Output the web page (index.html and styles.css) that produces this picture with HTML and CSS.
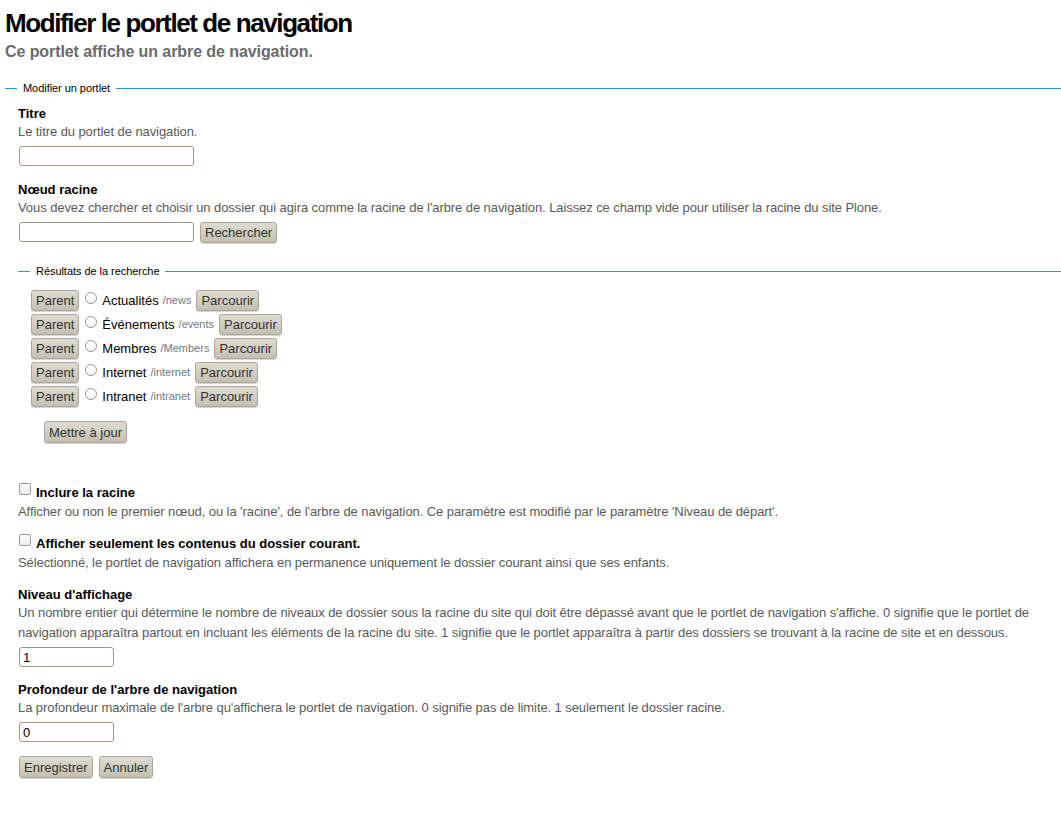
FILE: index.html
```html
<!DOCTYPE html>
<html lang="fr">
<head>
<meta charset="utf-8">
<title>Modifier le portlet de navigation</title>
<link rel="stylesheet" href="styles.css">
</head>
<body>
<h1 class="title">Modifier le portlet de navigation</h1>
<p class="lead">Ce portlet affiche un arbre de navigation.</p>

<form class="form">
  <fieldset class="group">
    <legend class="legend">Modifier un portlet</legend>

    <div class="field">
      <label class="label">Titre</label>
      <div class="help">Le titre du portlet de navigation.</div>
      <div class="input-row"><input class="text-input" type="text"></div>
    </div>

    <div class="field">
      <label class="label">Nœud racine</label>
      <div class="help">Vous devez chercher et choisir un dossier qui agira comme la racine de l'arbre de navigation. Laissez ce champ vide pour utiliser la racine du site Plone.</div>
      <div class="input-row"><input class="text-input" type="text"><button type="button" class="btn">Rechercher</button></div>
    </div>

    <fieldset class="group sub">
      <legend class="legend">Résultats de la recherche</legend>
      <div class="results">
        <div class="result"><button type="button" class="btn">Parent</button><input class="radio" type="radio" name="r"><span class="r-title">Actualités</span><span class="r-path">/news</span><button type="button" class="btn">Parcourir</button></div>
        <div class="result"><button type="button" class="btn">Parent</button><input class="radio" type="radio" name="r"><span class="r-title">Événements</span><span class="r-path">/events</span><button type="button" class="btn">Parcourir</button></div>
        <div class="result"><button type="button" class="btn">Parent</button><input class="radio" type="radio" name="r"><span class="r-title">Membres</span><span class="r-path">/Members</span><button type="button" class="btn">Parcourir</button></div>
        <div class="result"><button type="button" class="btn">Parent</button><input class="radio" type="radio" name="r"><span class="r-title">Internet</span><span class="r-path">/internet</span><button type="button" class="btn">Parcourir</button></div>
        <div class="result"><button type="button" class="btn">Parent</button><input class="radio" type="radio" name="r"><span class="r-title">Intranet</span><span class="r-path">/intranet</span><button type="button" class="btn">Parcourir</button></div>
      </div>
      <div class="update"><button type="button" class="btn">Mettre à jour</button></div>
    </fieldset>

    <div class="field check-field first-check">
      <label class="check-label"><input class="checkbox" type="checkbox">Inclure la racine</label>
      <div class="help">Afficher ou non le premier nœud, ou la 'racine', de l'arbre de navigation. Ce paramètre est modifié par le paramètre 'Niveau de départ'.</div>
    </div>

    <div class="field check-field">
      <label class="check-label"><input class="checkbox" type="checkbox">Afficher seulement les contenus du dossier courant.</label>
      <div class="help">Sélectionné, le portlet de navigation affichera en permanence uniquement le dossier courant ainsi que ses enfants.</div>
    </div>

    <div class="field">
      <label class="label">Niveau d'affichage</label>
      <div class="help">Un nombre entier qui détermine le nombre de niveaux de dossier sous la racine du site qui doit être dépassé avant que le portlet de navigation s'affiche. 0 signifie que le portlet de navigation apparaîtra partout en incluant les éléments de la racine du site. 1 signifie que le portlet apparaîtra à partir des dossiers se trouvant à la racine de site et en dessous.</div>
      <div class="input-row"><input class="text-input short" type="text" value="1"></div>
    </div>

    <div class="field last-field">
      <label class="label">Profondeur de l'arbre de navigation</label>
      <div class="help">La profondeur maximale de l'arbre qu'affichera le portlet de navigation. 0 signifie pas de limite. 1 seulement le dossier racine.</div>
      <div class="input-row"><input class="text-input short" type="text" value="0"></div>
    </div>

    <div class="actions">
      <button type="button" class="btn">Enregistrer</button>
      <button type="button" class="btn">Annuler</button>
    </div>
  </fieldset>
</form>
</body>
</html>
```

FILE: styles.css
```css
html, body {
  margin: 0;
  padding: 0;
  background: #fff;
}

body {
  font-family: "Liberation Sans", Arial, sans-serif;
  font-size: 13px;
  color: #000;
  padding: 8px 0 0 5px;
}

.title {
  margin: 0;
  font-size: 26px;
  line-height: 30px;
  font-weight: bold;
  letter-spacing: -1.4px;
  color: #000;
}

.lead {
  margin: 4px 0 0;
  font-size: 16px;
  line-height: 20px;
  font-weight: bold;
  letter-spacing: -0.08px;
  color: #6b6b6b;
}

.form {
  margin: 19px 0 0;
}

.group {
  margin: 0;
  padding: 10px 0 0 13px;
  border: none;
  border-top: 1px solid #2a9ad8;
  min-width: 0;
}

.legend {
  margin-left: -1px;
  padding: 0 6px;
  font-size: 11px;
  line-height: 14px;
  letter-spacing: -0.05px;
  color: #000;
}

.field {
  margin: 0 0 15px;
}

.label {
  display: block;
  font-weight: bold;
  line-height: 17px;
}

.help {
  line-height: 20px;
  letter-spacing: -0.08px;
  color: #5a5a5a;
}

.input-row {
  display: flex;
  align-items: center;
  gap: 6px;
  margin: 4px 0 0 1px;
  height: 20px;
}

.text-input {
  box-sizing: border-box;
  width: 175px;
  height: 20px;
  margin: 0;
  padding: 1px 3px;
  border: 1px solid #a39784;
  border-radius: 3px;
  font-family: inherit;
  font-size: 13px;
  color: #000;
  background: #fff;
}

.text-input.short {
  width: 95px;
}

.btn {
  box-sizing: border-box;
  height: 21px;
  margin: 0;
  padding: 0 4px;
  border: 1px solid #aca796;
  border-radius: 3px;
  background: linear-gradient(#dedcd3, #c3c0b2);
  box-shadow: 0 1px 1px rgba(0, 0, 0, 0.18);
  font-family: inherit;
  font-size: 13px;
  line-height: 17px;
  color: #333;
  cursor: pointer;
}

.group.sub {
  margin: 22px 0 0 0;
  padding: 10px 0 0 13px;
  border-top: 1px solid #2a9ad8;
}

.results {
  display: flex;
  flex-direction: column;
}

.result {
  display: flex;
  align-items: center;
  height: 24px;
}

.radio {
  appearance: none;
  -webkit-appearance: none;
  box-sizing: border-box;
  width: 12px;
  height: 12px;
  margin: -5px 5px 0 6px;
  border: 1px solid #9a9a9a;
  border-radius: 50%;
  background: radial-gradient(circle at 50% 40%, #fff 40%, #e8e8e8 100%);
}

.r-title {
  color: #000;
  margin-right: 4px;
}

.r-path {
  font-size: 11px;
  color: #6f7a85;
  margin-right: 5px;
}

.update {
  margin: 13px 0 0 13px;
}

.update .btn {
  height: 22px;
}

.check-field {
  margin-bottom: 11px;
}

.first-check {
  margin-top: 39px;
}

.check-field + .field:not(.check-field) {
  margin-top: 13px;
}

.last-field {
  margin-top: -1px;
}

.check-label {
  display: flex;
  align-items: center;
  height: 20px;
  font-weight: bold;
}

.checkbox {
  appearance: none;
  -webkit-appearance: none;
  box-sizing: border-box;
  width: 12px;
  height: 12px;
  margin: -6px 5px 0 1px;
  border: 1px solid #9a9a9a;
  border-radius: 2px;
  background: linear-gradient(#fff, #ececec);
}

.actions {
  display: flex;
  gap: 6px;
  margin: -1px 0 20px;
  padding-left: 1px;
}

.actions .btn {
  height: 22px;
}
```
